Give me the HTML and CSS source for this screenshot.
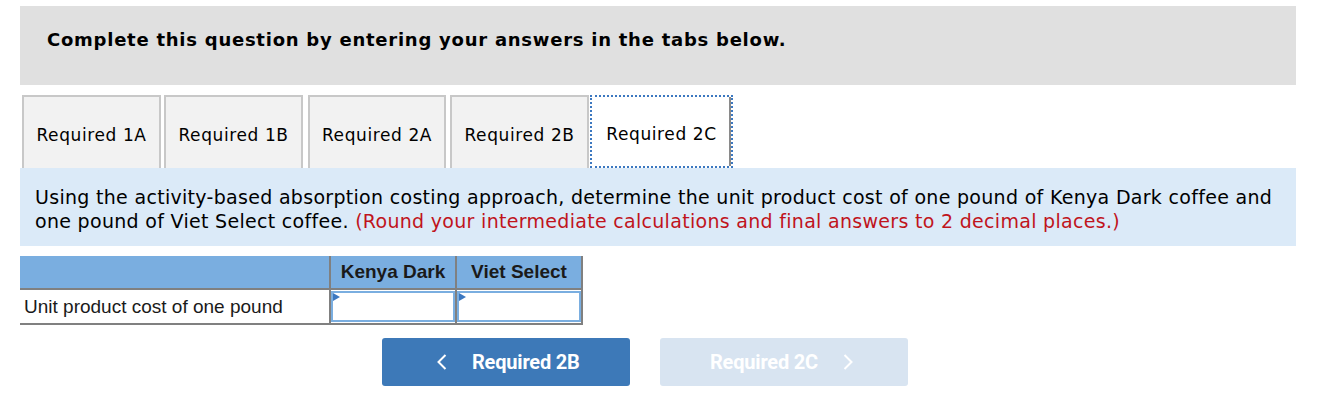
FILE: index.html
```html
<!DOCTYPE html>
<html>
<head>
<meta charset="utf-8">
<link rel="stylesheet" href="styles.css">
</head>
<body>
<div class="page">
  <div class="banner">Complete this question by entering your answers in the tabs below.</div>
  <div class="tabs">
    <div class="tab">Required 1A</div>
    <div class="tab">Required 1B</div>
    <div class="tab">Required 2A</div>
    <div class="tab">Required 2B</div>
    <div class="tab active">Required 2C</div>
  </div>
  <div class="prompt">Using the activity-based absorption costing approach, determine the unit product cost of one pound of Kenya Dark coffee and one pound of Viet Select coffee. <span class="red">(Round your intermediate calculations and final answers to 2 decimal places.)</span></div>
  <table class="grid">
    <tr class="head">
      <th class="lbl"></th>
      <th class="col">Kenya Dark</th>
      <th class="col">Viet Select</th>
    </tr>
    <tr class="row">
      <td class="lbl">Unit product cost of one pound</td>
      <td class="cell"><div class="inp"></div></td>
      <td class="cell"><div class="inp"></div></td>
    </tr>
  </table>
  <div class="nav">
    <div class="btn prev">
      <svg class="chev" width="10" height="16" viewBox="0 0 10 16"><polyline points="8.5,1 1.5,8 8.5,15" fill="none" stroke="#fff" stroke-width="2"/></svg>
      <span>Required 2B</span>
    </div>
    <div class="btn next">
      <span>Required 2C</span>
      <svg class="chev" width="10" height="16" viewBox="0 0 10 16"><polyline points="1.5,1 8.5,8 1.5,15" fill="none" stroke="#fff" stroke-width="2"/></svg>
    </div>
  </div>
</div>
</body>
</html>
```
FILE: styles.css
```css
html, body { margin: 0; padding: 0; background: #fff; }
.page {
  padding: 6px 40px 0 20px;
  font-family: "DejaVu Sans", Verdana, sans-serif;
  color: #000;
}
.banner {
  background: #e0e0e0;
  height: 79px;
  box-sizing: border-box;
  padding: 22px 0 0 27px;
  font-weight: bold;
  font-size: 18px;
  letter-spacing: 0.75px;
  line-height: 24px;
}
.tabs {
  display: flex;
  margin-top: 10px;
  padding-left: 2px;
  height: 73px;
  gap: 3px;
}
.tab {
  box-sizing: border-box;
  width: 139px;
  height: 73px;
  padding-top: 4px;
  border: 2px solid #c8c8c8;
  border-bottom: none;
  background: #f2f2f2;
  font-size: 17px;
  letter-spacing: 0.6px;
  display: flex;
  align-items: center;
  justify-content: center;
}
.tab:nth-child(3) { margin-left: 2px; width: 138px; }
.tab:nth-child(4) { margin-left: 1px; }
.tab.active {
  margin-left: -2px;
  width: 143px;
  background: #fff;
  border: 2px dotted #3c78c0;
  box-shadow: inset -2px 0 0 #8a8a8a;
}
.prompt {
  background: #dbeaf8;
  height: 78px;
  box-sizing: border-box;
  padding: 17px 15px 0 15px;
  font-size: 19px;
  letter-spacing: 0.3px;
  line-height: 24px;
}
.red { color: #c0141c; }
.grid {
  margin-top: 10px;
  border-collapse: collapse;
  font-family: "Liberation Sans", Arial, sans-serif;
  font-size: 19px;
}
.grid th, .grid td { padding: 0; }
.head th {
  background: #7aaee0;
  height: 32px;
  border-bottom: 2px solid #808080;
  font-weight: bold;
  color: #1a1a1a;
}
.head .col { border-left: 2px solid #808080; }
.head .col:last-child { border-right: 2px solid #808080; }
.lbl { width: 309px; text-align: left; }
.row td { height: 33px; border-bottom: 2px solid #808080; }
.row .lbl { padding-left: 4px; box-sizing: border-box; color: #1a1a1a; }
.col { width: 124px; text-align: center; }
.row .cell { border-left: 2px solid #808080; }
.row .cell:last-child { border-right: 2px solid #808080; }
.inp {
  position: relative;
  height: 31px;
  border: 2px solid #7aaee0;
  box-sizing: border-box;
  background: #fff;
}
.inp::before {
  content: "";
  position: absolute;
  left: 0;
  top: 0;
  border-left: 7px solid #3c78c0;
  border-top: 4px solid transparent;
  border-bottom: 4px solid transparent;
}
.nav {
  display: flex;
  gap: 30px;
  margin-top: 13px;
  padding-left: 362px;
}
.btn {
  box-sizing: border-box;
  width: 248px;
  height: 48px;
  border-radius: 3px;
  display: flex;
  align-items: center;
  gap: 25px;
  font-family: Roboto, "Liberation Sans", sans-serif;
  font-weight: bold;
  font-size: 20px;
  letter-spacing: -0.2px;
  color: #fff;
}
.prev { background: #3d79b8; padding-left: 55px; }
.next { background: #d8e4f1; padding-left: 50px; }
.chev { display: block; }
```
